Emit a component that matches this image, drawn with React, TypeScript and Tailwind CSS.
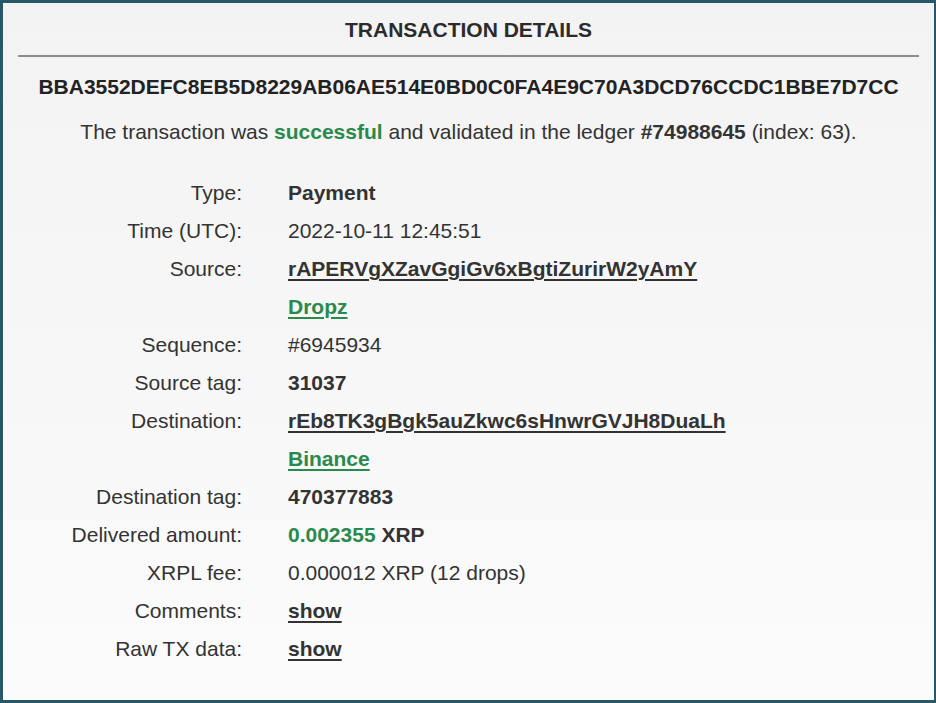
import type { ReactNode } from "react";

const font = { fontFamily: '"Liberation Sans", Arial, sans-serif' };

type Row = { label: string; value: ReactNode };

const rows: Row[] = [
  { label: "Type:", value: <span className="font-bold">Payment</span> },
  { label: "Time (UTC):", value: "2022-10-11 12:45:51" },
  {
    label: "Source:",
    value: <a className="font-bold underline underline-offset-[3px] decoration-2">rAPERVgXZavGgiGv6xBgtiZurirW2yAmY</a>,
  },
  {
    label: "",
    value: <a className="font-bold text-[#2a8a4c] underline underline-offset-[3px] decoration-2">Dropz</a>,
  },
  { label: "Sequence:", value: "#6945934" },
  { label: "Source tag:", value: <span className="font-bold">31037</span> },
  {
    label: "Destination:",
    value: <a className="font-bold underline underline-offset-[3px] decoration-2">rEb8TK3gBgk5auZkwc6sHnwrGVJH8DuaLh</a>,
  },
  {
    label: "",
    value: <a className="font-bold text-[#2a8a4c] underline underline-offset-[3px] decoration-2">Binance</a>,
  },
  { label: "Destination tag:", value: <span className="font-bold">470377883</span> },
  {
    label: "Delivered amount:",
    value: (
      <span className="font-bold">
        <span className="text-[#2a8a4c]">0.002355</span> XRP
      </span>
    ),
  },
  { label: "XRPL fee:", value: "0.000012 XRP (12 drops)" },
  { label: "Comments:", value: <a className="font-bold underline underline-offset-[3px] decoration-2">show</a> },
  { label: "Raw TX data:", value: <a className="font-bold underline underline-offset-[3px] decoration-2">show</a> },
];

export default function App() {
  return (
    <div
      style={font}
      className="w-[936px] h-[703px] border-t-[3px] border-l-[3px] border-b-[3px] border-r-[2px] border-[#285868] bg-gradient-to-b from-[#f3f3f3] to-[#fbfbfb] text-[#333] overflow-hidden"
    >
      <h1 className="text-[21px] font-bold text-center leading-[24px] pt-[15px] text-[#2b2b2b]">TRANSACTION DETAILS</h1>
      <div className="mx-[15px] mt-[13px] h-[2px] bg-[#8c8c8c]" />

      <div className="text-[21px] font-bold text-center leading-[24px] mt-[18px] text-[#222]">
        BBA3552DEFC8EB5D8229AB06AE514E0BD0C0FA4E9C70A3DCD76CCDC1BBE7D7CC
      </div>

      <p className="text-[21px] text-center leading-[24px] mt-[21px]">
        The transaction was <span className="font-bold text-[#2a8a4c]">successful</span> and validated in the
        ledger <span className="font-bold">#74988645</span> (index: 63).
      </p>

      <div className="mt-[30px] flex flex-col">
        {rows.map((r, i) => (
          <div key={i} className="flex h-[38px] items-center text-[21px]">
            <div className="w-[239px] text-right">{r.label}</div>
            <div className="ml-[46px]">{r.value}</div>
          </div>
        ))}
      </div>
    </div>
  );
}
